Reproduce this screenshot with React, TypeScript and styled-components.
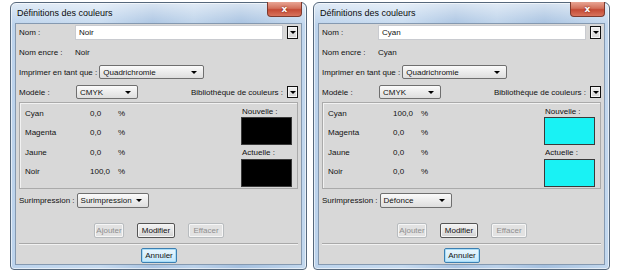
import React from "react";
import styled, { createGlobalStyle } from "styled-components";

type Ink = { name: string; values: string[]; swatch: string; overprint: string };

const inks: Ink[] = [
  { name: "Noir", values: ["0,0", "0,0", "0,0", "100,0"], swatch: "#000000", overprint: "Surimpression" },
  { name: "Cyan", values: ["100,0", "0,0", "0,0", "0,0"], swatch: "#19f2f4", overprint: "Défonce" },
];

const channels = ["Cyan", "Magenta", "Jaune", "Noir"];

const GlobalStyle = createGlobalStyle`
  html, body {
    margin: 0;
    padding: 0;
    background: #ffffff;
  }
  body {
    font-family: "Liberation Sans", Arial, sans-serif;
    font-size: 8px;
    color: #111;
  }
`;

const Page = styled.div`
  width: 620px;
  height: 272px;
  box-sizing: border-box;
  padding: 2px 0 0 10px;
  display: flex;
  gap: 6px;
  background: #fff;
  overflow: hidden;
`;

const Window = styled.div`
  width: 297px;
  height: 268px;
  box-sizing: border-box;
  display: flex;
  flex-direction: column;
  padding: 0 4px 4px;
  border: 1px solid #56687c;
  border-radius: 6px 6px 4px 4px;
  background:
    linear-gradient(180deg, rgba(255, 255, 255, 0.55), rgba(255, 255, 255, 0) 22px),
    linear-gradient(90deg, #bcd3ec 0%, #c7dbf0 30%, #aac4e2 48%, #bcd2ea 62%, #a6c1e0 78%, #c3d8ee 100%);
  box-shadow: inset 0 0 0 1px rgba(255, 255, 255, 0.6);
`;

const TitleBar = styled.div`
  height: 20px;
  display: flex;
  align-items: flex-start;
`;

const Title = styled.span`
  margin: 5px 0 0 2px;
  font-size: 9px;
  color: #0b0b0b;
`;

const Close = styled.div`
  margin-left: auto;
  margin-top: -1px;
  width: 35px;
  height: 15px;
  box-sizing: border-box;
  display: flex;
  align-items: center;
  justify-content: center;
  border: 1px solid #7d3a2e;
  border-top: none;
  border-radius: 0 0 4px 4px;
  background: linear-gradient(180deg, #e8a594 0%, #d2705b 45%, #c44a35 55%, #d8735c 100%);
  color: #fff;
  font-family: "DejaVu Sans", sans-serif;
  font-weight: bold;
  font-size: 9px;
  text-shadow: 0 0 2px #6b1a10;
`;

const Content = styled.div`
  flex: 1;
  display: flex;
  flex-direction: column;
  padding: 1px 3px 0;
  background: #d8d8d8;
  border: 1px solid #8599b0;
`;

const Row = styled.div<{ $top: number }>`
  display: flex;
  align-items: center;
  height: 14px;
  margin-top: ${(p) => p.$top}px;
`;

const Label = styled.span<{ $width?: number }>`
  flex: none;
  width: ${(p) => (p.$width ? `${p.$width}px` : "auto")};
  white-space: nowrap;
`;

const TextField = styled.div`
  flex: 1;
  height: 15px;
  box-sizing: border-box;
  display: flex;
  align-items: center;
  padding-left: 3px;
  background: #fff;
  border: 1px solid #c9cbd0;
`;

const Arrow = styled.span`
  width: 0;
  height: 0;
  border-left: 3px solid transparent;
  border-right: 3px solid transparent;
  border-top: 3px solid #000;
`;

const SquareButton = styled.div`
  flex: none;
  width: 11px;
  height: 13px;
  margin-left: 4px;
  box-sizing: border-box;
  display: flex;
  align-items: center;
  justify-content: center;
  border: 1px solid #111;
  box-shadow: inset 0 0 0 1px #f4f4f4;
  background: linear-gradient(180deg, #f0f0f0, #d4d4d4);
`;

const Combo = styled.div<{ $width: number }>`
  flex: none;
  width: ${(p) => p.$width}px;
  height: 14px;
  box-sizing: border-box;
  display: flex;
  align-items: center;
  justify-content: space-between;
  padding: 0 6px 0 3px;
  border: 1px solid #6f6f6f;
  border-radius: 2px;
  background: linear-gradient(180deg, #fbfbfb 0%, #ececec 50%, #dedede 100%);
`;

const Spacer = styled.div`
  flex: 1;
`;

const Group = styled.div`
  margin-top: 3px;
  height: 87px;
  box-sizing: border-box;
  display: flex;
  padding: 0 5px;
  border: 1px solid #aaaaaa;
  box-shadow: inset 1px 1px 0 #f2f2f2;
`;

const Values = styled.div`
  display: grid;
  grid-template-columns: 65px 28px auto;
  grid-auto-rows: 19.5px;
  align-items: center;
  padding-top: 0.5px;
`;

const Preview = styled.div`
  margin-left: auto;
  width: 51px;
  display: flex;
  flex-direction: column;
  padding-top: 4px;
`;

const PreviewLabel = styled.span<{ $top: number }>`
  height: 10px;
  line-height: 10px;
  margin-top: ${(p) => p.$top}px;
  padding-left: 1px;
`;

const Swatch = styled.div<{ $color: string }>`
  height: 28px;
  box-sizing: border-box;
  background: ${(p) => p.$color};
  border: 1px solid #3a3a3a;
`;

const Actions = styled.div`
  margin-top: 15px;
  display: flex;
  justify-content: center;
  gap: 13px;
  padding-left: 1px;
`;

const Button = styled.div<{ $width: number; $state?: "disabled" | "default" | "focus" }>`
  width: ${(p) => p.$width}px;
  height: 15px;
  box-sizing: border-box;
  display: flex;
  align-items: center;
  justify-content: center;
  border-radius: 2px;
  border: 1px solid
    ${(p) => (p.$state === "disabled" ? "#b8bcbf" : p.$state === "default" ? "#3c7fb1" : "#555")};
  color: ${(p) => (p.$state === "disabled" ? "#8f8f8f" : "#111")};
  background: ${(p) =>
    p.$state === "disabled"
      ? "#e2e2e2"
      : p.$state === "default"
      ? "linear-gradient(180deg, #eaf6fd 0%, #d9f0fc 50%, #bee6fd 100%)"
      : "linear-gradient(180deg, #f3f3f3 0%, #e6e6e6 50%, #d2d2d2 100%)"};
  box-shadow: ${(p) => (p.$state === "default" ? "inset 0 0 0 1px #a8dcf7" : "inset 0 0 0 1px #f6f6f6")};
`;

const Separator = styled.div`
  margin-top: 5px;
  height: 1px;
  background: #a9a9a9;
  border-bottom: 1px solid #f2f2f2;
`;

const Footer = styled.div`
  margin-top: 3px;
  display: flex;
  justify-content: center;
  padding-left: 1px;
`;

const ColorDialog: React.FC<{ ink: Ink }> = ({ ink }) => (
  <Window>
    <TitleBar>
      <Title>Définitions des couleurs</Title>
      <Close>x</Close>
    </TitleBar>
    <Content>
      <Row $top={0} style={{ height: 15 }}>
        <Label $width={56}>Nom :</Label>
        <TextField>{ink.name}</TextField>
        <SquareButton>
          <Arrow />
        </SquareButton>
      </Row>
      <Row $top={5}>
        <Label $width={56}>Nom encre :</Label>
        <span>{ink.name}</span>
      </Row>
      <Row $top={6}>
        <Label>Imprimer en tant que :</Label>
        <Combo $width={105} style={{ marginLeft: 2 }}>
          Quadrichromie
          <Arrow />
        </Combo>
      </Row>
      <Row $top={6}>
        <Label $width={57}>Modèle :</Label>
        <Combo $width={62}>
          CMYK
          <Arrow />
        </Combo>
        <Spacer />
        <Label>Bibliothèque de couleurs :</Label>
        <SquareButton style={{ height: 12 }}>
          <Arrow />
        </SquareButton>
      </Row>
      <Group>
        <Values>
          {channels.map((c, i) => (
            <React.Fragment key={c}>
              <span>{c}</span>
              <span>{ink.values[i]}</span>
              <span>%</span>
            </React.Fragment>
          ))}
        </Values>
        <Preview>
          <PreviewLabel $top={0}>Nouvelle :</PreviewLabel>
          <Swatch $color={ink.swatch} />
          <PreviewLabel $top={3}>Actuelle :</PreviewLabel>
          <Swatch $color={ink.swatch} style={{ marginTop: 1 }} />
        </Preview>
      </Group>
      <Row $top={4} style={{ height: 15 }}>
        <Label>Surimpression :</Label>
        <Combo $width={72} style={{ marginLeft: 2, height: 15 }}>
          {ink.overprint}
          <Arrow />
        </Combo>
      </Row>
      <Actions>
        <Button $width={30} $state="disabled">Ajouter</Button>
        <Button $width={38} $state="focus">Modifier</Button>
        <Button $width={36} $state="disabled">Effacer</Button>
      </Actions>
      <Separator />
      <Footer>
        <Button $width={36} $state="default">Annuler</Button>
      </Footer>
    </Content>
  </Window>
);

const App: React.FC = () => (
  <>
    <GlobalStyle />
    <Page>
      {inks.map((ink) => (
        <ColorDialog key={ink.name} ink={ink} />
      ))}
    </Page>
  </>
);

export default App;
